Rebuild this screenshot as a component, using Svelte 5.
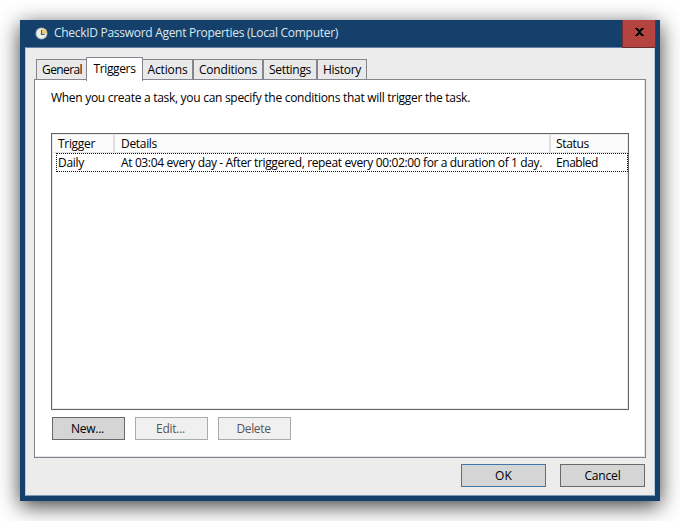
<script>
  const tabs = [
    { name: 'General', box: 52, text: 40 },
    { name: 'Triggers', box: 57, text: 42, active: true },
    { name: 'Actions', box: 51, text: 40 },
    { name: 'Conditions', box: 70, text: 58 },
    { name: 'Settings', box: 54, text: 42 },
    { name: 'History', box: 50, text: 38 }
  ];

  // Spread or tighten the tracking so that a label fills its width.
  function fit(node, width) {
    const natural = node.getBoundingClientRect().width;
    node.style.letterSpacing = `${(width - natural) / node.textContent.length}px`;
  }
</script>

{#snippet label(text, width)}<span class="label" use:fit={width}>{text}</span>{/snippet}

<div class="desktop">
  <div class="window">
    <header>
      <svg class="clock" width="13" height="13" viewBox="0 0 13 13">
        <circle cx="6.5" cy="6.5" r="6" fill="#aeb9bd" />
        <circle cx="6.5" cy="6.5" r="4.9" fill="#eceeea" />
        <path d="M6.5 6.5V1A5.5 5.5 0 0 1 12 6.5Z" fill="#efcb78" />
        <path d="M6.5 3v4.3h3.2" fill="none" stroke="#56636c" stroke-width="1.2" />
      </svg>
      <div class="title">{@render label('CheckID Password Agent Properties (Local Computer)', 284)}</div>
      <button class="close" aria-label="Close">
        <svg width="9" height="8" viewBox="0 0 9 8"><path d="M0 0h3v1h1v1h1V1h1V0h3v1H8v1H7v1H6v2h1v1h1v1h1v1H6V7H5V6H4v1H3v1H0V7h1V6h1V5h1V3H2V2H1V1H0z" fill="#080808" /></svg>
      </button>
    </header>
    <main>
      <nav>
        {#each tabs as tab}
          <button class="tab" class:active={tab.active} style:width="{tab.box}px">{@render label(tab.name, tab.text)}</button>
        {/each}
      </nav>
      <section class="panel">
        <p>{@render label('When you create a task, you can specify the conditions that will trigger the task.', 419)}</p>
        <div class="list">
          <div class="row head">
            <div class="c1">{@render label('Trigger', 37)}</div>
            <div class="c2">{@render label('Details', 36)}</div>
            <div>{@render label('Status', 33)}</div>
          </div>
          <div class="row item">
            <div class="c1">{@render label('Daily', 26)}</div>
            <div class="c2">{@render label('At 03:04 every day - After triggered, repeat every 00:02:00 for a duration of 1 day.', 421)}</div>
            <div>{@render label('Enabled', 42)}</div>
          </div>
        </div>
        <div class="actions">
          <button class="btn">{@render label('New...', 33)}</button>
          <button class="btn" disabled>{@render label('Edit...', 29)}</button>
          <button class="btn" disabled>{@render label('Delete', 34)}</button>
        </div>
      </section>
      <footer>
        <button class="btn default">{@render label('OK', 17)}</button>
        <button class="btn">{@render label('Cancel', 36)}</button>
      </footer>
    </main>
  </div>
</div>

<style>
  :global(body) { background: #fff; overflow: hidden; }
  .desktop, .desktop * { box-sizing: border-box; }
  .desktop {
    width: 680px; height: 521px; padding: 20px; overflow: hidden; background: #fff;
    font: 12px/16px "Open Sans", "Noto Sans", sans-serif; color: #000;
  }
  button { font: inherit; color: inherit; padding: 0; margin: 0; border-radius: 0; }
  .label { display: inline-block; white-space: pre; }
  .window {
    width: 640px; height: 481px; background: #15406b; padding: 0 5px 5px;
    display: flex; flex-direction: column;
    box-shadow: 0 5px 20px rgba(0, 0, 0, .76);
  }
  header { height: 27px; display: flex; flex: none; }
  .clock { margin: 7px 6px 0 10px; flex: none; }
  .title { color: #dce7ee; flex: 1; padding-top: 5px; }
  .close {
    width: 34px; height: 28px; flex: none; margin-right: -1px; position: relative;
    border: 1px solid #6c2d34; border-top: 0; background: #b34440;
    display: flex; justify-content: center; padding-top: 8px;
  }
  main {
    flex: 1; background: #ececec; border: 1px solid #bccbd8; border-top-color: #6681a8;
    border-bottom-color: #7d9ab4; padding: 9px 8px 0; display: flex; flex-direction: column;
  }
  nav { display: flex; align-items: flex-end; height: 23px; padding-left: 2px; flex: none; margin-bottom: -1px; }
  .tab {
    height: 21px; flex: none; border: 1px solid #85858d; background: #e9e9e9;
    display: flex; justify-content: center; padding-top: 2px;
  }
  .tab.active {
    height: 24px; margin: 0 -1px 0 -2px; padding-top: 3px; background: #fff;
    border-bottom: 0; position: relative; top: 1px;
  }
  .panel { width: 612px; height: 379px; flex: none; background: #fff; border: 1px solid #85858d; padding: 10px 16px 0; box-shadow: inset -1px -1px #e3e3e8; }
  p { margin: 0; height: 43px; }
  .list { width: 578px; height: 277px; border: 1px solid #646464; box-shadow: inset 0 0 0 1px #e9e9e9; }
  .row { display: flex; }
  .c1 { width: 63px; flex: none; }
  .c2 { width: 435px; flex: none; }
  .head { height: 18px; margin: 1px 1px 0; padding: 1px 0 0 5px; background: #fbfbfb; border-bottom: 1px solid #e1e1e1; }
  .head .c1, .head .c2 { border-right: 2px solid #dfdfdf; margin-top: -1px; padding-top: 1px; }
  .head .c1 { width: 57px; margin-right: 6px; }
  .head .c2 { width: 430px; margin-right: 5px; }
  .item { height: 19px; margin-left: 4px; border: 1px dotted #111; padding: 1px 0 0 1px; }
  .actions { display: flex; gap: 10px; padding: 7px 0 0 1px; }
  .btn { width: 73px; height: 23px; border: 1px solid #69696b; background: #d5d5d5; display: flex; align-items: center; justify-content: center; padding: 1px 2px 0 0; }
  .btn:disabled { border-color: #a7acac; background: #f0f0f0; color: #555; }
  footer { display: flex; gap: 14px; justify-content: flex-end; padding: 6px 1px 0 0; }
  footer .btn { width: 85px; padding-right: 0; }
  footer .default { border-color: #3e78aa; }
</style>
